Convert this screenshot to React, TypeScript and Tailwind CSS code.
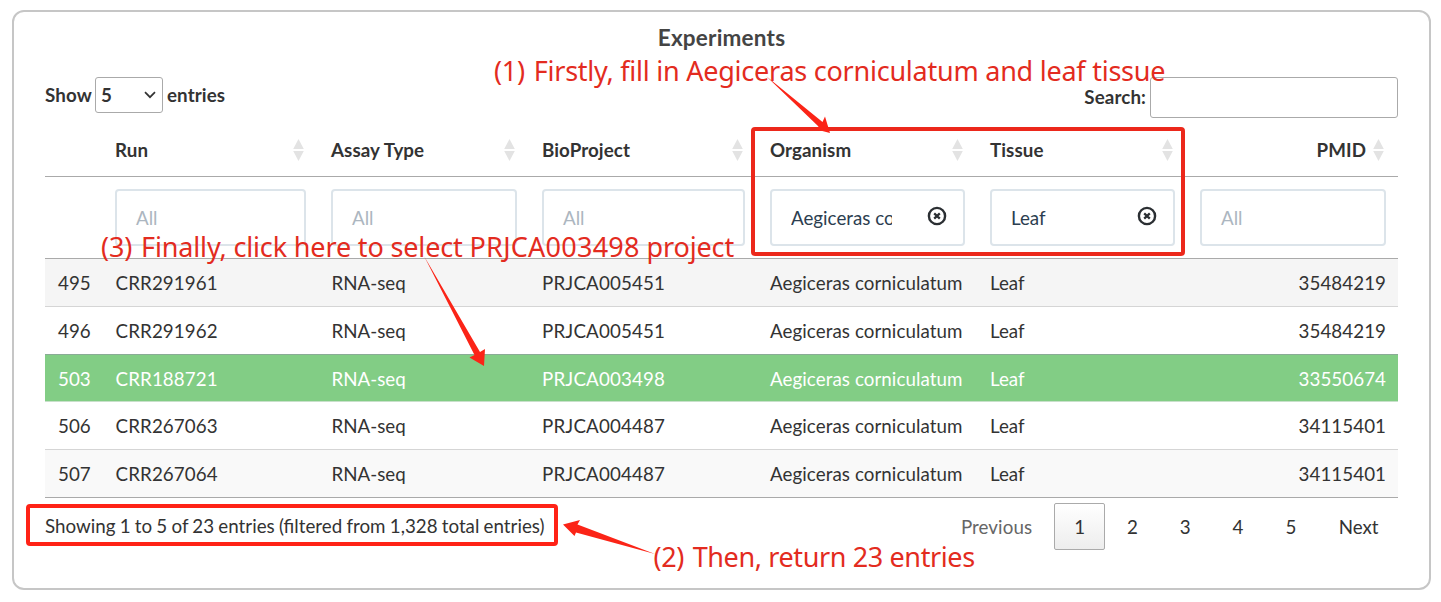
import React from "react";

const GRID =
  "grid grid-cols-[58px_216px_211px_228px_220px_210px_210px]";

const columns = [
  { label: "Run", value: "" },
  { label: "Assay Type", value: "" },
  { label: "BioProject", value: "" },
  { label: "Organism", value: "Aegiceras corniculatum" },
  { label: "Tissue", value: "Leaf" },
  { label: "PMID", value: "", right: true },
];

const rows = [
  { id: "495", cells: ["CRR291961", "RNA-seq", "PRJCA005451", "Aegiceras corniculatum", "Leaf", "35484219"], style: "h-[47px] bg-[#f5f5f5]" },
  { id: "496", cells: ["CRR291962", "RNA-seq", "PRJCA005451", "Aegiceras corniculatum", "Leaf", "35484219"], style: "h-12 border-t border-[#d5d5d5]" },
  { id: "503", cells: ["CRR188721", "RNA-seq", "PRJCA003498", "Aegiceras corniculatum", "Leaf", "33550674"], style: "h-[47px] border-t border-[#8aab96] bg-[#82cd85] pt-px text-white" },
  { id: "506", cells: ["CRR267063", "RNA-seq", "PRJCA004487", "Aegiceras corniculatum", "Leaf", "34115401"], style: "h-12 border-t border-[#c8e0ca]" },
  { id: "507", cells: ["CRR267064", "RNA-seq", "PRJCA004487", "Aegiceras corniculatum", "Leaf", "34115401"], style: "h-12 border-t border-[#d5d5d5] bg-[#f9f9f9]" },
];

const cellStyles = [
  "pl-[12.5px] tracking-[0.12px]",
  "pl-[12.5px]",
  "pl-3 tracking-[0.15px]",
  "pl-3 tracking-[0.07px]",
  "pl-3",
  "pl-3 text-right tracking-[0.06px]",
];

function SortIcon() {
  return (
    <svg className="h-[22px] w-[11px] shrink-0 fill-[#e3e3e3]" viewBox="0 0 11 22">
      <path d="M5.5 0L10.8 10H.2z" />
      <path d="M.2 12h10.6L5.5 22z" />
    </svg>
  );
}

function ClearIcon() {
  return (
    <svg className="mt-[-4px] size-5 shrink-0" viewBox="0 0 20 20" fill="none" stroke="#2b2f33">
      <circle cx="10" cy="10" r="8.1" strokeWidth="2.4" />
      <path d="M7.2 7.4l5.6 5.200M12.8 7.400l-5.6 5.200" strokeWidth="2.3" />
    </svg>
  );
}

function Toolbar() {
  return (
    <div className="flex h-[47px] items-start justify-between font-bold tracking-[0.1px]">
      <label className="flex h-9 items-center">
        <span className="w-[50px]">Show</span>
        <span className="mr-1 flex h-9 w-[68px] items-center justify-between rounded-[3px] border border-[#aaa] pr-[6px] pl-[5px]">
          5
          <svg className="h-[8px] w-3" viewBox="0 0 12 8" fill="none" stroke="#333" strokeWidth="1.7">
            <path d="M1 1.2l5 5 5-5" />
          </svg>
        </span>
        entries
      </label>
      <label className="flex h-[41px] items-center gap-1">
        <span className="pb-0.5">Search:</span>
        <span className="h-[41px] w-[248px] rounded-[3px] border border-[#aaa]" />
      </label>
    </div>
  );
}

function FilterInput({ value, last }: { value: string; last: boolean }) {
  return (
    <div className={`pt-3 pl-3 ${last ? "pr-3" : "pr-[13px]"}`}>
      <div className="flex h-[57px] items-center justify-between rounded-[4px] border-2 border-[#dce4ea] pr-[16px] pl-[19px]">
        {value ? (
          <>
            <span className="w-[101px] overflow-hidden whitespace-nowrap text-[#2c3e50]">{value}</span>
            <ClearIcon />
          </>
        ) : (
          <span className="text-[#acb6c0]">All</span>
        )}
      </div>
    </div>
  );
}

function Pagination() {
  return (
    <div className="flex h-[47px] items-center">
      <span className="mr-[22px] tracking-[0.08px] text-[#666]">Previous</span>
      <span className="flex h-[47px] w-[51px] items-center justify-center rounded-[2px] border border-[#aaa] bg-linear-to-b from-white to-[#ededed]">
        1
      </span>
      {["2", "3", "4", "5"].map((page) => (
        <span key={page} className="ml-[1.8px] w-[51px] text-center">
          {page}
        </span>
      ))}
      <span className="mr-[19.5px] ml-[22.3px]">Next</span>
    </div>
  );
}

function Annotations() {
  const note =
    "absolute whitespace-nowrap font-['Noto_Sans',sans-serif] text-[27px] leading-9 text-[#e32b20]";
  return (
    <div className="pointer-events-none absolute inset-0">
      <div className="absolute top-[127px] left-[751px] h-[129px] w-[434px] rounded-[4px] border-4 border-[#ec281b]" />
      <div className="absolute top-[504px] left-[26px] h-[42px] w-[532px] rounded-[4px] border-4 border-[#ff2216]" />
      <svg className="absolute inset-0 h-full w-full fill-[#fb2417]" viewBox="0 0 1441 602">
        <path d="M766 76L822.500 122L825 116.500L830 133L816.500 129.500L818.500 126.500z" />
        <path d="M424 256L480 352L485 349L484 366L469.500 357.500L474.500 355z" />
        <path d="M655 554L576 532.500L574.500 536L563 524.500L580 520L577.500 524.500z" />
      </svg>
      <span className={`${note} top-[53px] left-[494px] tracking-[-0.24px]`}>
        <span className="mr-0.5">(1)</span> Firstly, fill in Aegiceras corniculatum and leaf tissue
      </span>
      <span className={`${note} top-[229px] left-[101px] tracking-[-0.15px]`}>
        <span className="mr-0.5">(3)</span> Finally, click here to select <span className="tracking-[0.25px]">PRJCA003498</span> project
      </span>
      <span className={`${note} top-[539px] left-[653.5px] tracking-[-0.38px]`}>
        <span className="mr-0.5">(2)</span> Then, return 23 entries
      </span>
    </div>
  );
}

export default function App() {
  return (
    <div className="relative h-[602px] w-[1441px] overflow-hidden bg-white px-3 pt-[10px] font-[Lato,sans-serif] text-[18.75px] leading-[22px] text-[#333]">
      <main className="h-[580px] w-[1419px] rounded-[12px] border-2 border-[#c6c6c6] px-[31px] pt-[12px]">
        <h1 className="h-[53px] text-center text-[22.5px] leading-7 font-bold tracking-[0.2px] text-[#444]">Experiments</h1>
        <Toolbar />
        <div className={`${GRID} h-[53px] border-b border-[#aaa] font-bold tracking-[0.08px]`}>
          <span />
          {columns.map((c) => (
            <div
              key={c.label}
              className={`flex items-center pl-3 ${c.right ? "justify-end gap-[7px] pr-[14px]" : "justify-between pr-[15px]"}`}
            >
              {c.label}
              <SortIcon />
            </div>
          ))}
        </div>
        <div className={`${GRID} h-[82px] border-b border-[#aaa]`}>
          <span />
          {columns.map((c) => (
            <FilterInput key={c.label} value={c.value} last={c.label === "PMID"} />
          ))}
        </div>
        <div className="border-b border-[#aaa]">
          {rows.map((row) => (
            <div key={row.id} className={`${GRID} items-center ${row.style}`}>
              <span className="pl-[13px]">{row.id}</span>
              {row.cells.map((cell, i) => (
                <span key={i} className={`pr-3 whitespace-nowrap ${cellStyles[i]}`}>
                  {cell}
                </span>
              ))}
            </div>
          ))}
        </div>
        <footer className="mt-[5px] flex items-center justify-between">
          <span className="pb-0.5 [word-spacing:-0.55px]">Showing 1 to 5 of 23 entries (filtered from 1,328 total entries)</span>
          <Pagination />
        </footer>
      </main>
      <Annotations />
    </div>
  );
}
